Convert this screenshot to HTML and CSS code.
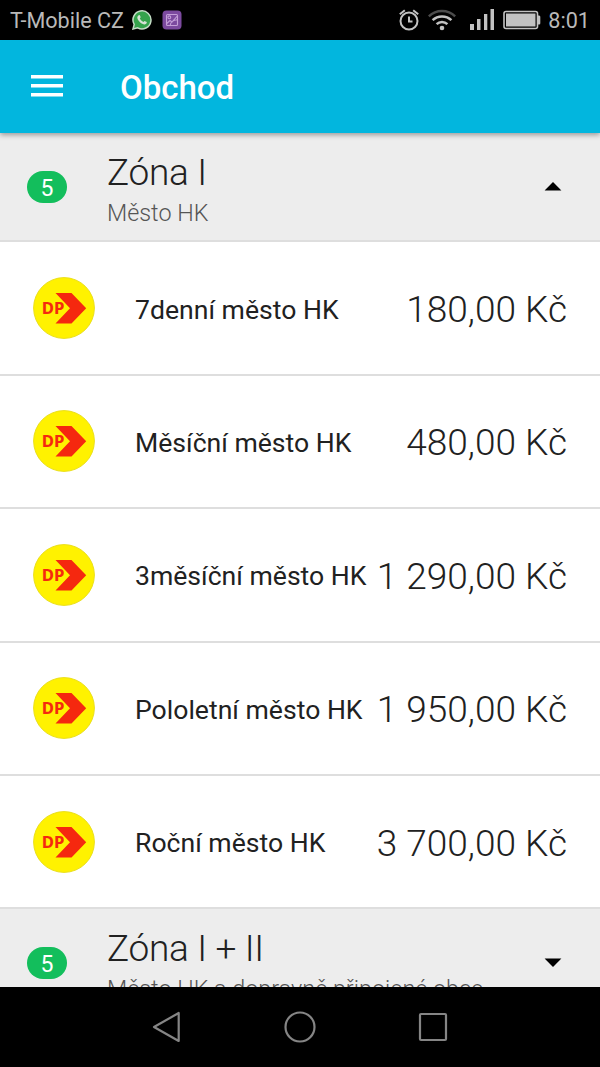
FILE: index.html
```html
<!DOCTYPE html>
<html lang="cs">
<head>
<meta charset="utf-8">
<title>Obchod</title>
<link rel="stylesheet" href="styles.css">
</head>
<body>
<svg class="defs" width="0" height="0">
  <symbol id="dp" viewBox="0 0 62 62">
    <circle cx="31" cy="31" r="30.4" fill="#fff200" stroke="#eadf1c" stroke-width="1"/>
    <path d="M22.5 16H38.5L53.2 31.2L38.5 46.5H22.5L37 31.2Z" fill="#f5280f"/>
    <text x="8.8" y="37" class="dp-text">DP</text>
  </symbol>
</svg>
<div class="screen">
  <div class="status">
    <span class="carrier">T-Mobile CZ</span>
    <svg class="whatsapp" width="20" height="20" viewBox="0 0 20 20">
      <path d="M1 19L2.2 14.4A9 9 0 1 1 5.7 17.8Z" fill="#35a34c" stroke="#c4dcc6" stroke-width="1.5"/>
      <path d="M6.3 5.6C7.2 4.7 7.8 5 8.1 5.8L8.6 7C8.8 7.6 8 8.1 7.8 8.5C8.6 10.1 9.8 11.2 11.4 11.9L12.5 10.9L14.8 12C15 13.5 13.5 14.5 12.2 14.4C8.7 13.7 5.6 10.6 5.3 7.5C5.3 6.7 5.7 6.2 6.3 5.6Z" fill="#d5e2d5"/>
    </svg>
    <svg class="gallery" width="20" height="20" viewBox="0 0 20 20">
      <rect x=".5" y=".5" width="19" height="19" rx="4" fill="#7c4a9f"/>
      <g fill="none" stroke="#c49fd8" stroke-width="1.1"><rect x="4.5" y="4.5" width="11" height="11" rx="1"/><circle cx="7.3" cy="7.3" r="1.4"/><path d="M4.7 13.5L8 10.5L10 12L15.3 6M8.2 15.3C8.5 12.5 11 10.3 15.3 9.8"/></g>
    </svg>
    <span class="spacer"></span>
    <svg class="alarm" width="20" height="22" viewBox="0 0 20 22">
      <g fill="none" stroke="#c2c2c2" stroke-width="2"><circle cx="10" cy="12" r="8.5"/><path d="M10 7.5V12.5H13.5M.8 5.3L5.8 1.3M19.2 5.3L14.2 1.3"/></g>
    </svg>
    <svg class="wifi" width="28" height="22" viewBox="0 0 28 22">
      <g fill="none" stroke="#c2c2c2" stroke-width="2.5"><path d="M.8 7.4A18.8 18.8 0 0 1 27.2 7.4" stroke="#4c4c4c"/><path d="M4.6 11.2A13.5 13.5 0 0 1 23.4 11.2M8.6 15.2A7.8 7.8 0 0 1 19.4 15.2"/></g>
      <circle cx="14" cy="19" r="2.3" fill="#c2c2c2"/>
    </svg>
    <svg class="signal" width="26" height="22" viewBox="0 0 26 22">
      <path d="M1 15H5V21H1ZM8 10H11.5V21H8ZM15 5H18.3V21H15ZM21.5 0H25V21H21.5Z" fill="#c2c2c2"/>
    </svg>
    <svg class="battery" width="38" height="20" viewBox="0 0 38 20">
      <rect x="1" y="1.5" width="33.5" height="17" rx="2" fill="none" stroke="#c2c2c2" stroke-width="1.6"/>
      <rect x="3" y="3.5" width="29.5" height="13" fill="#c2c2c2"/>
      <path d="M35 5.5H36A1.3 1.3 0 0 1 37.3 7V13A1.3 1.3 0 0 1 36 14.5H35Z" fill="#c2c2c2"/>
    </svg>
    <span class="clock">8:01</span>
  </div>
  <header class="appbar">
    <svg class="menu" width="32" height="23" viewBox="0 0 32 23"><path d="M0 0H32V3.4H0ZM0 9H32V12.4H0ZM0 18H32V21.4H0Z" fill="#fff"/></svg>
    <h1 class="title">Obchod</h1>
  </header>
  <main class="list">
    <section class="zone">
      <span class="badge">5</span>
      <div class="zone-text"><h2 class="zone-name">Zóna I</h2><p class="zone-sub">Město HK</p></div>
      <svg class="caret" width="18" height="9" viewBox="0 0 18 9"><path d="M.6 8.5L9 0L17.4 8.5Z"/></svg>
    </section>
    <div class="item"><svg class="logo"><use href="#dp"/></svg><span class="name">7denní město HK</span><span class="price">180,00 Kč</span></div>
    <div class="item"><svg class="logo"><use href="#dp"/></svg><span class="name">Měsíční město HK</span><span class="price">480,00 Kč</span></div>
    <div class="item"><svg class="logo"><use href="#dp"/></svg><span class="name">3měsíční město HK</span><span class="price">1 290,00 Kč</span></div>
    <div class="item"><svg class="logo"><use href="#dp"/></svg><span class="name">Pololetní město HK</span><span class="price">1 950,00 Kč</span></div>
    <div class="item"><svg class="logo"><use href="#dp"/></svg><span class="name">Roční město HK</span><span class="price">3 700,00 Kč</span></div>
    <section class="zone">
      <span class="badge">5</span>
      <div class="zone-text"><h2 class="zone-name">Zóna I + II</h2><p class="zone-sub">Město HK a dopravně připojené obce</p></div>
      <svg class="caret" width="18" height="9" viewBox="0 0 18 9"><path d="M.6 .5L9 9L17.4 .5Z"/></svg>
    </section>
  </main>
  <nav class="navbar">
    <svg width="34" height="34" viewBox="0 0 34 34"><path d="M4 17L28.7 3V31Z"/></svg>
    <svg width="34" height="34" viewBox="0 0 34 34"><circle cx="17" cy="17" r="14.5"/></svg>
    <svg width="34" height="34" viewBox="0 0 34 34"><rect x="4" y="4" width="26" height="26" rx="1"/></svg>
  </nav>
</div>
</body>
</html>
```
FILE: styles.css
```css
* { box-sizing: border-box; }
body { margin: 0; font-family: Roboto, "Noto Sans", sans-serif; color: #212121; background: #000; }
h1, h2, p { margin: 0; }
svg { display: block; flex: none; }
.defs { display: none; }
.screen { width: 600px; height: 1067px; display: flex; flex-direction: column; overflow: hidden; }
.status { height: 40px; flex: none; display: flex; align-items: center; padding: 0 10px 0 10px; color: #b9b9b9; font-size: 22px; background: #000; }
.carrier { width: 114px; margin-right: 8px; padding-top: 1px; font-size: 21.6px; white-space: nowrap; }
.gallery { margin-left: 10px; }
.spacer { flex: 1; }
.wifi { margin-left: 9px; }
.signal { margin-left: 13px; }
.battery { margin-left: 8px; }
.clock { margin-left: 7px; padding-top: 1px; font-size: 21.6px; }
.appbar { height: 93px; flex: none; display: flex; align-items: center; padding: 2px 31px; background: #02b6de; box-shadow: 0 2px 5px rgba(0, 0, 0, .35); position: relative; z-index: 1; }
.title { margin-left: 57px; padding-top: 2px; color: #fff; font-size: 33px; font-weight: 500; }
.list { height: 854px; flex: none; overflow: hidden; background: #fff; }
.zone { height: 109.4px; display: flex; align-items: flex-start; padding: 18px 38px 0 27px; background: #ededed; border-bottom: 2px solid #dedede; }
.badge { width: 40px; height: 32px; margin-top: 20px; border-radius: 16px; background: #13be5c; color: #fff; font-size: 23px; line-height: 35px; text-align: center; }
.zone-text { flex: 1; margin-left: 40px; white-space: nowrap; }
.zone-name { font-size: 37px; line-height: 44px; font-weight: 300; letter-spacing: -.3px; }
.zone-sub { margin-top: 4px; color: #555; font-size: 23.35px; line-height: 28px; font-weight: 300; }
.caret { margin-top: 31px; }
.item { height: 133.4px; display: flex; align-items: center; padding: 0 33px; border-bottom: 2px solid #dedede; white-space: nowrap; }
.logo { width: 62px; height: 62px; }
.dp-text { font: 700 16.5px "Open Sans", sans-serif; fill: #f5280f; stroke: #f5280f; stroke-width: .2px; }
.name { margin-left: 40px; padding-top: 2px; font-size: 26.6px; font-weight: 400; }
.price { margin-left: auto; padding-top: 3px; font-size: 37px; font-weight: 300; }
.navbar { height: 80px; flex: none; display: flex; justify-content: center; align-items: center; gap: 99px; background: #000; }
.navbar svg { fill: none; stroke: #858585; stroke-width: 2.2; stroke-linejoin: round; }
```
